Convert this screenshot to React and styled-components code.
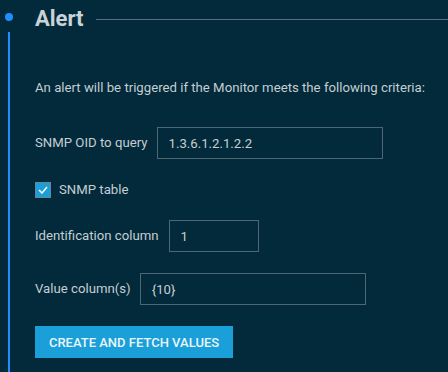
import React from "react";
import styled, { createGlobalStyle } from "styled-components";

const Global = createGlobalStyle`
  html, body { margin: 0; padding: 0; background: #022a3a; }
  body { font-family: Roboto, "Liberation Sans", sans-serif; }
`;

const Page = styled.div`
  width: 448px;
  height: 372px;
  background: #022a3a;
  position: relative;
  overflow: hidden;
  display: flex;
`;

const Rail = styled.div`
  width: 35px;
  flex: none;
  position: relative;
`;

const Dot = styled.div`
  position: absolute;
  left: 5px;
  top: 13px;
  width: 8px;
  height: 8px;
  border-radius: 50%;
  background: #1e8fff;
`;

const Line = styled.div`
  position: absolute;
  left: 8px;
  top: 32px;
  bottom: 0;
  width: 2px;
  background: #1e8fff;
`;

const Content = styled.div`
  flex: 1;
  display: flex;
  flex-direction: column;
`;

const Header = styled.div`
  display: flex;
  align-items: center;
  height: 38px;
  gap: 12px;
`;

const Title = styled.h2`
  margin: 0;
  font-size: 22px;
  font-weight: 700;
  color: #c9d3d8;
  line-height: 38px;
`;

const Rule = styled.div`
  flex: 1;
  height: 1px;
  background: #587079;
`;

const Desc = styled.p`
  margin: 42px 0 0;
  font-size: 13.2px;
  color: #c4ced3;
  line-height: 16px;
`;

const Row = styled.div`
  display: flex;
  align-items: center;
  gap: ${(p) => p.$gap}px;
  margin-top: ${(p) => p.$mt}px;
`;

const Label = styled.label`
  font-size: 13.2px;
  color: #c4ced3;
  line-height: 16px;
`;

const Input = styled.div`
  box-sizing: border-box;
  width: ${(p) => p.$w}px;
  height: 32px;
  border: 1px solid #4e6873;
  display: flex;
  align-items: center;
  padding-left: 11px;
  font-size: 13.2px;
  color: #c4ced3;
`;

const Check = styled.span`
  box-sizing: border-box;
  width: 16px;
  height: 16px;
  border: 1px solid #6b8591;
  background: #1a9fd8;
  display: flex;
  align-items: center;
  justify-content: center;
`;

const Button = styled.button`
  margin-top: 21px;
  align-self: flex-start;
  width: 198px;
  height: 32px;
  border: none;
  background: #1a9fd8;
  color: #eaf6fb;
  font-family: inherit;
  font-size: 13px;
  font-weight: 500;
  text-transform: uppercase;
  padding: 0;
`;

export default function App() {
  return (
    <Page>
      <Global />
      <Rail>
        <Dot />
        <Line />
      </Rail>
      <Content>
        <Header>
          <Title>Alert</Title>
          <Rule />
        </Header>
        <Desc>An alert will be triggered if the Monitor meets the following criteria:</Desc>
        <Row $gap={9} $mt={31}>
          <Label>SNMP OID to query</Label>
          <Input $w={226}>1.3.6.1.2.1.2.2</Input>
        </Row>
        <Row $gap={8} $mt={23}>
          <Check>
            <svg width="10" height="8" viewBox="0 0 10 8">
              <path d="M1 4 L4 7 L9 1" fill="none" stroke="#fff" strokeWidth="1.5" />
            </svg>
          </Check>
          <Label>SNMP table</Label>
        </Row>
        <Row $gap={10} $mt={22}>
          <Label>Identification column</Label>
          <Input $w={90}>1</Input>
        </Row>
        <Row $gap={9} $mt={21}>
          <Label>Value column(s)</Label>
          <Input $w={226}>{"{10}"}</Input>
        </Row>
        <Button>Create and fetch values</Button>
      </Content>
    </Page>
  );
}
